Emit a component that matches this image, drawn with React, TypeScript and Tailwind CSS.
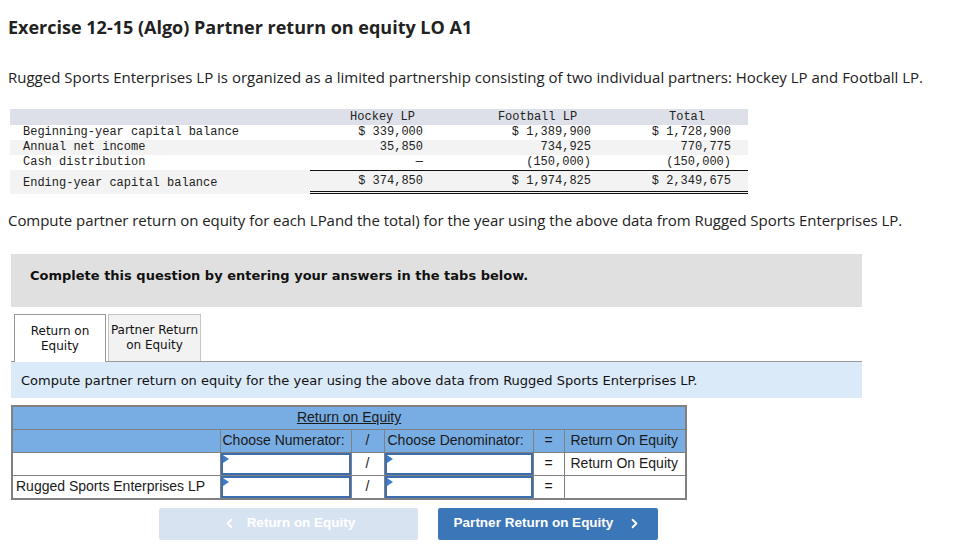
import React from "react";
import { ChevronLeft, ChevronRight } from "lucide-react";

// Source data for the capital table
const CAPITAL_ROWS = [
    { label: "Beginning-year capital balance", hockey: "$ 339,000", football: "$ 1,389,900", total: "$ 1,728,900", shade: false },
    { label: "Annual net income", hockey: "35,850", football: "734,925", total: "770,775", shade: true },
    { label: "Cash distribution", hockey: "—", football: "(150,000)", total: "(150,000)", shade: false },
];

const ANSWER_ROWS = [
    { label: "", result: "Return On Equity" },
    { label: "Rugged Sports Enterprises LP", result: "" },
];

const SANS = "font-['Open_Sans',sans-serif]";
const VERDANA = "font-['DejaVu_Sans',sans-serif]";
const ARIAL = "font-['Liberation_Sans',Arial,sans-serif]";

function AnswerInput() {
    return (
        <div className="relative h-[22px] border-2 border-[#3b6fb0] bg-white">
            <div className="absolute left-0 top-0 h-0 w-0 border-l-[6px] border-t-[4px] border-b-[4px] border-l-[#3d7cc9] border-t-transparent border-b-transparent" />
        </div>
    );
}

function CapitalTable() {
    const grid = "grid grid-cols-[300px_145px_165px_128px]";
    return (
        <div className="ml-[10px] mt-[22px] w-[738px] font-['Liberation_Mono',monospace] text-[12px] text-[#222] leading-[15px]">
            <div className={`${grid} bg-[#dde0e9] h-[16px] items-end`}>
                <div />
                <div className="text-center">Hockey LP</div>
                <div className="text-center">Football LP</div>
                <div className="text-center pl-[6px]">Total</div>
            </div>
            {CAPITAL_ROWS.map(row => (
                <div key={row.label} className={`${grid} h-[15px] ${row.shade ? "bg-[#f3f3f3]" : "bg-white"}`}>
                    <div className="pl-[13px]">{row.label}</div>
                    <div className="text-right pr-[32px]">{row.hockey}</div>
                    <div className="text-right pr-[29px]">{row.football}</div>
                    <div className="text-right pr-[17px]">{row.total}</div>
                </div>
            ))}
            <div className={`${grid} h-[24px] bg-[#f3f3f3] items-center`}>
                <div className="pl-[13px] pt-[2px]">Ending-year capital balance</div>
                <div className="h-full border-t border-b-[3px] border-double border-[#111] flex items-center justify-end pr-[32px]">$ 374,850</div>
                <div className="h-full border-t border-b-[3px] border-double border-[#111] flex items-center justify-end pr-[29px]">$ 1,974,825</div>
                <div className="h-full border-t border-b-[3px] border-double border-[#111] flex items-center justify-end pr-[17px]">$ 2,349,675</div>
            </div>
        </div>
    );
}

export default function App() {
    return (
        <div className="w-[960px] h-[556px] bg-white overflow-hidden text-[#222]">
            <h1 className={`${SANS} font-bold text-[18px] leading-[22px] pl-[8px] pt-[16px] text-[#222]`}>
                Exercise 12-15 (Algo) Partner return on equity LO A1
            </h1>

            <p className={`${SANS} text-[15px] leading-[20px] pl-[8px] mt-[29px]`}>
                Rugged Sports Enterprises LP is organized as a limited partnership consisting of two individual partners: Hockey LP and Football LP.
            </p>

            <CapitalTable />

            <p className={`${SANS} text-[15px] tracking-[-0.05px] leading-[20px] pl-[8px] mt-[16px]`}>
                Compute partner return on equity for each LPand the total) for the year using the above data from Rugged Sports Enterprises LP.
            </p>

            <div className={`${VERDANA} ml-[11px] mt-[24px] w-[851px] h-[53px] bg-[#e0e0e0] pt-[14px] pl-[19px] font-bold text-[13px] leading-[16px] text-[#111]`}>
                Complete this question by entering your answers in the tabs below.
            </div>

            {/* Tabs */}
            <div className={`${VERDANA} ml-[11px] mt-[8px] w-[851px] text-[12px] leading-[15px]`}>
                <div className="flex items-end h-[47px] border-b border-[#999]">
                    <div className="ml-[3px] w-[92px] h-[48px] -mb-px border border-b-0 border-[#999] bg-white flex items-center justify-center text-center text-[#111]">
                        Return on<br />Equity
                    </div>
                    <div className="ml-[2px] w-[93px] h-[47px] border border-b-0 border-[#c6c6c6] bg-[#f2f2f2] flex items-center justify-center text-center text-[#111]">
                        Partner Return<br />on Equity
                    </div>
                </div>
                <div className="h-[36px] bg-[#dbeaf8] flex items-center pl-[10px] text-[13px] text-[#111]">
                    Compute partner return on equity for the year using the above data from Rugged Sports Enterprises LP.
                </div>
            </div>

            {/* Answer table */}
            <table className={`${ARIAL} ml-[11px] mt-[7px] w-[674px] table-fixed border-collapse border-2 border-[#808080] text-[14px] text-[#1a1a1a]`}>
                <colgroup>
                    <col className="w-[208px]" />
                    <col className="w-[131px]" />
                    <col className="w-[33px]" />
                    <col className="w-[149px]" />
                    <col className="w-[31px]" />
                    <col className="w-[122px]" />
                </colgroup>
                <thead>
                    <tr className="h-[23px] bg-[#78ade3]">
                        <th colSpan={6} className="font-normal text-center underline">Return on Equity</th>
                    </tr>
                    <tr className="h-[23px] bg-[#78ade3]">
                        <th className="border border-[#808080]" />
                        <th className="border border-[#808080] font-normal text-left pl-[2px]">Choose Numerator:</th>
                        <th className="border border-[#808080] font-normal">/</th>
                        <th className="border border-[#808080] font-normal text-left pl-[3px]">Choose Denominator:</th>
                        <th className="border border-[#808080] font-normal">=</th>
                        <th className="border border-[#808080] font-normal text-left pl-[6px]">Return On Equity</th>
                    </tr>
                </thead>
                <tbody>
                    {ANSWER_ROWS.map((row, i) => (
                        <tr key={i} className="h-[23px] bg-white">
                            <td className="border border-[#808080] pl-[3px] whitespace-nowrap">{row.label}</td>
                            <td className="border border-[#808080] p-0"><AnswerInput /></td>
                            <td className="border border-[#808080] text-center">/</td>
                            <td className="border border-[#808080] p-0"><AnswerInput /></td>
                            <td className="border border-[#808080] text-center">=</td>
                            <td className="border border-[#808080] pl-[6px]">{row.result}</td>
                        </tr>
                    ))}
                </tbody>
            </table>

            {/* Navigation buttons */}
            <div className={`${ARIAL} flex mt-[8px] ml-[159px] gap-[20px] text-[13.5px] font-bold text-white`}>
                <button type="button" className="w-[259px] h-[32px] rounded-[2px] bg-[#d7e3f1] flex items-center justify-center gap-[10px]">
                    <ChevronLeft size={15} strokeWidth={3} />
                    <span>Return on Equity</span>
                </button>
                <button type="button" className="w-[220px] h-[32px] rounded-[2px] bg-[#3b76b9] flex items-center justify-center gap-[14px]">
                    <span>Partner Return on Equity</span>
                    <ChevronRight size={15} strokeWidth={3} />
                </button>
            </div>
        </div>
    );
}
